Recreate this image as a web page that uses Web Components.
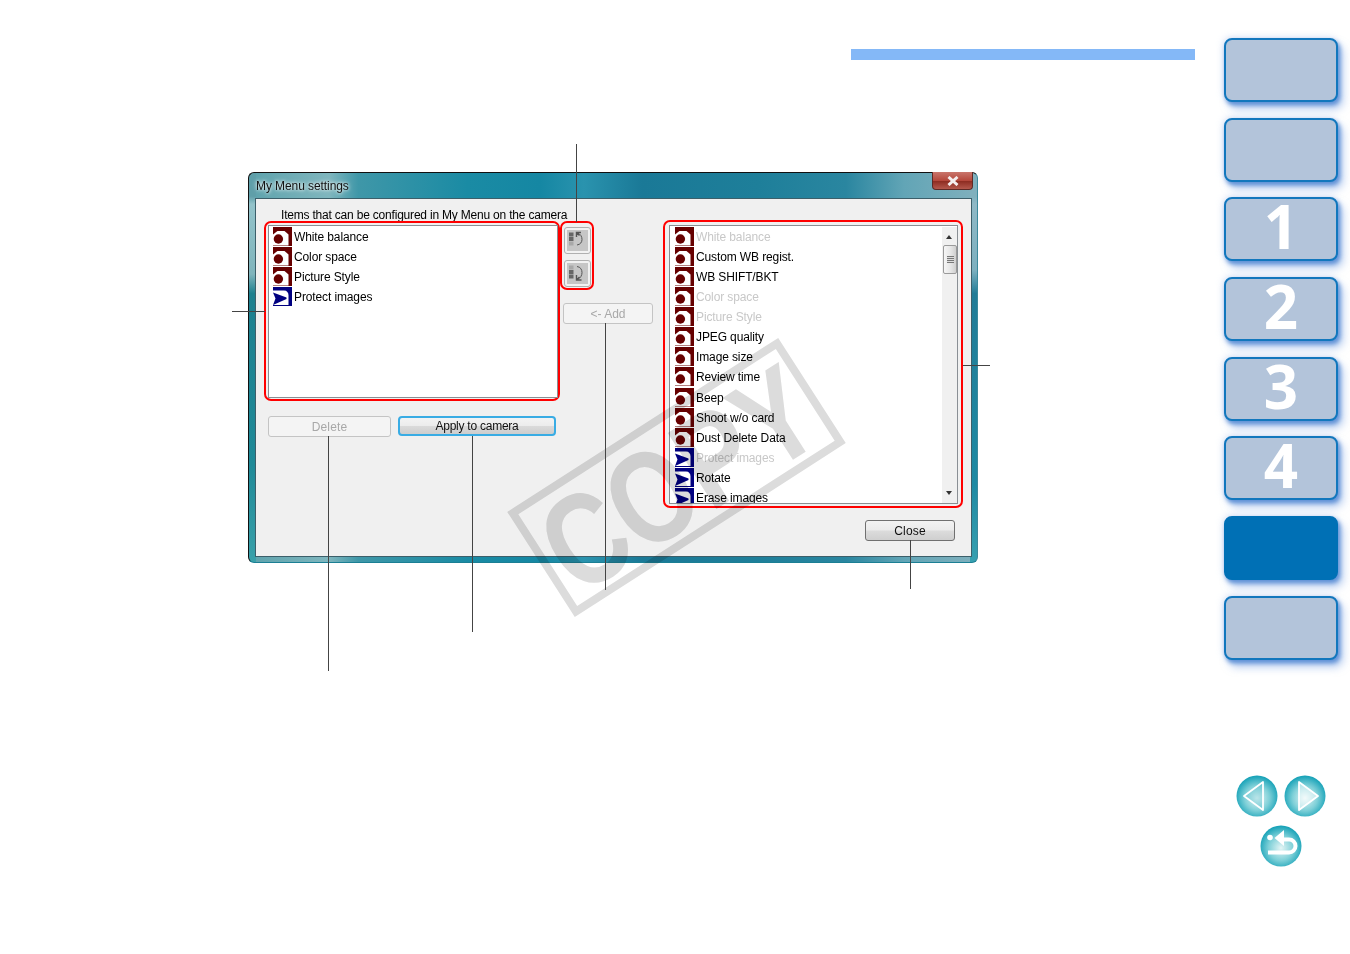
<!DOCTYPE html>
<html lang="en"><head><meta charset="utf-8"><title>My Menu settings</title>
<style>
html,body{margin:0;padding:0;background:#fff}
body{font-family:"Liberation Sans",Arial,sans-serif;font-size:12px;color:#000}
</style></head><body>

<x-page>
  <x-dialog slot="main" caption="My Menu settings">
    <span slot="label">Items that can be configured in My Menu on the camera</span>
    <x-list slot="left">
      <x-item>White balance</x-item><x-item>Color space</x-item><x-item>Picture Style</x-item><x-item icon="play">Protect images</x-item>
    </x-list>
    <x-btn slot="delete" kind="off" style="width:123px;height:21px">Delete</x-btn>
    <x-btn slot="apply" kind="focus" style="width:158px;height:20px;letter-spacing:-.25px">Apply to camera</x-btn>
    <x-order slot="up"></x-order>
    <x-order slot="down" dir="down"></x-order>
    <x-btn slot="add" kind="off" style="width:90px;height:21px;margin-left:3px;letter-spacing:0">&lt;- Add</x-btn>
    <x-list slot="right" scroll>
      <x-item off>White balance</x-item><x-item>Custom WB regist.</x-item><x-item>WB SHIFT/BKT</x-item><x-item off>Color space</x-item><x-item off>Picture Style</x-item><x-item>JPEG quality</x-item><x-item>Image size</x-item><x-item>Review time</x-item><x-item>Beep</x-item><x-item>Shoot w/o card</x-item><x-item>Dust Delete Data</x-item><x-item off icon="play">Protect images</x-item><x-item icon="play">Rotate</x-item><x-item icon="play">Erase images</x-item>
    </x-list>
    <x-btn slot="close" style="width:90px;height:21px">Close</x-btn>
  </x-dialog>

  <x-tab slot="rail"></x-tab><x-tab slot="rail"></x-tab>
  <x-tab slot="rail">1</x-tab><x-tab slot="rail">2</x-tab><x-tab slot="rail">3</x-tab><x-tab slot="rail">4</x-tab>
  <x-tab slot="rail" active></x-tab><x-tab slot="rail"></x-tab>
  <x-nav slot="rail"></x-nav>

  <x-watermark slot="over"></x-watermark>
  <x-callout slot="over" style="left:576px;top:144px;width:1px;height:78px"></x-callout>
  <x-callout slot="over" style="left:232px;top:311px;width:33px;height:1px"></x-callout>
  <x-callout slot="over" style="left:963px;top:365px;width:27px;height:1px"></x-callout>
  <x-callout slot="over" style="left:605px;top:323px;width:1px;height:267px"></x-callout>
  <x-callout slot="over" style="left:472px;top:436px;width:1px;height:196px"></x-callout>
  <x-callout slot="over" style="left:328px;top:436px;width:1px;height:235px"></x-callout>
  <x-callout slot="over" style="left:910px;top:540px;width:1px;height:49px"></x-callout>
</x-page>

<script>
function shadow(el, html){ const r = el.attachShadow({mode:'open'}); r.innerHTML = html; return r; }

customElements.define('x-page', class extends HTMLElement{
  constructor(){ super(); shadow(this, `<style>
    :host{display:grid;grid-template-columns:1224px 126px;width:1350px;height:954px;position:relative;overflow:hidden;background:#fff}
    .bar{height:11px;width:344px;margin:49px 0 112px 851px;background:#84b8f7}
    .main{margin-left:248px}
    .rail{display:flex;flex-direction:column;gap:15.67px;padding-top:38px}
  </style>
  <div class="left"><div class="bar"></div><div class="main"><slot name="main"></slot></div></div>
  <div class="rail"><slot name="rail"></slot></div>
  <slot name="over"></slot>`); }
});

customElements.define('x-tab', class extends HTMLElement{
  constructor(){ super(); shadow(this, `<style>
    :host{display:flex;align-items:center;justify-content:center;box-sizing:border-box;width:114px;height:64px;flex:none;padding-bottom:6px;background:#b3c4da;border:2px solid #1277bd;border-radius:8px;
      box-shadow:2px 3px 4px #5d90d6,5px 7px 9px rgba(120,160,225,.55),-1px -1px 7px rgba(170,190,235,.45);
      font:700 60px/1 "Open Sans","Liberation Sans",sans-serif;color:#fff}
    :host([active]){background:#0070b5;border-color:#0070b5}
  </style><slot></slot>`); }
});

customElements.define('x-nav', class extends HTMLElement{
  constructor(){ super(); const disc=(id)=>`<defs><radialGradient id="${id}" cx=".5" cy=".55" r=".55"><stop offset="0" stop-color="#e4f5f5"/><stop offset=".55" stop-color="#7fd0d8"/><stop offset="1" stop-color="#12a0b6"/></radialGradient></defs><circle cx="21" cy="21" r="20.5" fill="url(#${id})"/>`;
  shadow(this, `<style>
    :host{display:flex;flex-direction:column;align-items:center;gap:8px;width:114px;margin-top:99.300px}
    .row{display:flex;gap:6px}
    svg{display:block;width:42px;height:42px}
  </style>
  <div class="row">
    <svg viewBox="0 0 42 42">${disc('a')}<path d="M8 21 27 7V35Z" fill="#5cc0cc" fill-opacity=".3" stroke="#fff" stroke-width="1.800" stroke-linejoin="round"/></svg>
    <svg viewBox="0 0 42 42">${disc('b')}<path d="M34 21 15 7V35Z" fill="#fff" fill-opacity=".5" stroke="#fff" stroke-width="1.800" stroke-linejoin="round"/></svg>
  </div>
  <svg viewBox="0 0 42 42">${disc('c')}
    <circle cx="10" cy="12.500" r="2.800" fill="#fff"/>
    <path d="M20 14.500H29A6.500 6.500 0 0 1 29 27.500H8" fill="none" stroke="#fff" stroke-width="4"/>
    <path d="M14.500 13 24 5V21Z" fill="#fff"/>
  </svg>`); }
});

customElements.define('x-dialog', class extends HTMLElement{
  constructor(){ super(); shadow(this, `<style>
    :host{display:flex;flex-direction:column;box-sizing:border-box;width:730px;height:391px;position:relative;border:1px solid;border-color:#111 #3c8a9c #1b7f94 #111;border-radius:6px;padding:0 5px 5px 6px;
      background:
       linear-gradient(#5f9fa9 0,#5f9fa9 6%,#93c3ca 8%,#7fb4bc 26%,#1c7f8e 31%,#1f8a98 75%,#3aa1aa) left top/7px 100% no-repeat,
       linear-gradient(#80b0bd 0,#80b0bd 6%,#8fb9c6 8%,#7db0bf 25%,#227c97 31%,#1e8aa3 80%,#37a0b0) right top/7px 100% no-repeat,
       linear-gradient(90deg,#5da2ac 0,#7fb6be 11%,#3f97a8 15%,#1a8ba4 30%,#1587a3 40%,#2a93ae 46%,#1a7997 54%,#1e7f9a 70%,#2a86a0 82%,#62a5b6 90%,#80b0bd 100%)}
    .title{height:25px;flex:none;display:flex;align-items:center;font-size:12px;letter-spacing:-.08px;color:#111;text-shadow:0 0 5px #fff,0 0 3px rgba(255,255,255,.8);padding:1px 0 0 1px;box-sizing:border-box}
    .x{position:absolute;right:4px;top:-1px;width:41px;height:18px;box-sizing:border-box;border:1px solid #5d2a26;border-top:0;border-radius:0 0 4px 4px;background:linear-gradient(#c9756b,#b5483c 50%,#8e2d22 55%,#b4584c);display:flex;align-items:center;justify-content:center}
    .client{flex:1;box-sizing:border-box;background:#f0f0f0;border:1px solid #3c5f6a;display:grid;grid-template-columns:296px 103px 300px;padding-left:8px;position:relative}
    .c1{display:flex;flex-direction:column}
    .label{height:22px;box-sizing:border-box;padding:10px 0 0 17px;line-height:12px;font-size:12px;letter-spacing:-.2px;white-space:nowrap}
    .hl{box-sizing:border-box;border:2px solid #f00;border-radius:7px;padding:2px}
    .hl1{height:180px;padding:2px 0 1px 2px}
    .row{display:flex;gap:7px;margin:15px 0 0 4px}
    .c2{padding-top:22px}
    .hl2{width:34px;height:69px;padding:4px 2px;display:flex;flex-direction:column;gap:6px}
    .add{margin-top:13px}
    .c3{padding-top:21px;display:flex;flex-direction:column;align-items:flex-end}
    .hl3{width:300px;height:288px;padding:3px 3px 2px 4px}
    .close{margin:12px 8px 0 0}
  </style>
  <div class="title"></div>
  <div class="x"><svg width="14" height="10" viewBox="0 0 14 10"><path d="M2.500 1 11.500 9M11.500 1 2.500 9" stroke="#f4eeee" stroke-width="3" fill="none"/></svg></div>
  <div class="client">
    <div class="c1">
      <div class="label"><slot name="label"></slot></div>
      <div class="hl hl1"><slot name="left"></slot></div>
      <div class="row"><slot name="delete"></slot><slot name="apply"></slot></div>
    </div>
    <div class="c2">
      <div class="hl hl2"><slot name="up"></slot><slot name="down"></slot></div>
      <div class="add"><slot name="add"></slot></div>
    </div>
    <div class="c3">
      <div class="hl hl3"><slot name="right"></slot></div>
      <div class="close"><slot name="close"></slot></div>
    </div>
  </div>`);
  this.shadowRoot.querySelector('.title').textContent=this.getAttribute('caption'); }
});

customElements.define('x-list', class extends HTMLElement{
  constructor(){ super(); shadow(this, `<style>
    :host{display:flex;height:100%;box-sizing:border-box;background:#fff;border:1px solid #8a8f94;overflow:hidden}
    .rows{flex:1;display:flex;flex-direction:column;padding:1px 0 0 4px;min-width:0}
    .sb{display:none;width:15px;flex:none;background:#f0f0f0;flex-direction:column;align-items:center;position:relative;margin-top:1px}
    :host([scroll]) .sb{display:flex}
    :host([scroll]) .rows{padding-left:5px}
    .thumb{position:absolute;left:1px;top:18px;width:14px;height:29px;box-sizing:border-box;border:1px solid #9a9a9a;border-radius:2px;background:linear-gradient(90deg,#f6f6f6,#e6e6e6 55%,#cfcfcf);display:flex;align-items:center;justify-content:center}
    .up{position:absolute;left:4px;top:8px;border:3.500px solid transparent;border-top:0;border-bottom:4px solid #333}
    .down{position:absolute;left:4px;bottom:8px;border:3.500px solid transparent;border-bottom:0;border-top:4px solid #333}
    .grip{width:7px;height:7px;background:repeating-linear-gradient(#777 0 1px,#ddd 1px 2px)}
  </style><div class="rows"><slot></slot></div>
  <div class="sb"><span class="up"></span><span class="thumb"><span class="grip"></span></span><span class="down"></span></div>`); }
});

customElements.define('x-item', class extends HTMLElement{
  constructor(){ super();
  const cam=`<svg viewBox="0 0 19 19" width="19" height="19"><rect width="19" height="19" fill="#660000"/><path d="M0 7.500 4.500 4H11.500L15.500 7.500V18.500H0Z" fill="#fff"/><circle cx="5.400" cy="12" r="4.700" fill="#660000"/></svg>`;
  const play=`<svg viewBox="0 0 19 19" width="19" height="19"><rect width="19" height="19" fill="#000080"/><path d="M0 3.500H11C14 3.500 15.500 5.500 15.500 8.500V18H0Z" fill="#fff"/><path d="M0 5.500 13.500 10.500V12L0 18 2.500 11.500Z" fill="#000080"/></svg>`;
  shadow(this, `<style>
    :host{display:flex;align-items:center;gap:2px;height:20.070px;flex:none;font-size:12px;letter-spacing:-.12px;white-space:nowrap;color:#000}
    :host([off]){color:#c8c8c8}
    svg{display:block;flex:none;align-self:flex-start}
  </style>${this.getAttribute('icon')==='play'?play:cam}<slot></slot>`); }
});

customElements.define('x-btn', class extends HTMLElement{
  constructor(){ super(); shadow(this, `<style>
    :host{display:flex;align-items:center;justify-content:center;box-sizing:border-box;font-size:12px;letter-spacing:.15px;border:1px solid #707070;border-radius:3px;background:linear-gradient(#f3f3f3 0,#ebebeb 48%,#dcdcdc 52%,#cfcfcf);color:#111;white-space:nowrap}
    :host([kind=off]){border-color:#c4c4c4;background:#f4f4f4;color:#a8a8a8}
    :host([kind=focus]){border:2px solid #39ace4;border-radius:4px;background:linear-gradient(#f3f3f3 0,#ececec 48%,#dadada 52%,#cdcdcd)}
  </style><slot></slot>`); }
});

customElements.define('x-order', class extends HTMLElement{
  constructor(){ super(); const d=this.getAttribute('dir')==='down';
  const c=d?['#a8a8a8','#666','#666']:['#666','#666','#a8a8a8'];
  const arrow=d
    ?`<path d="M10 3.500C13.500 4 15 6.500 15 9.500 15 12.500 13.500 15 10.500 16.500" fill="none" stroke="#555"/><path d="M9.500 12V17H14.500M9.500 17 12.500 14" fill="none" stroke="#555" stroke-width="1.400"/>`
    :`<path d="M10 15C13.500 14.500 15 12 15 9.500 15 6.500 13.500 4 10.500 3" fill="none" stroke="#555"/><path d="M9.500 7V2.500H14M9.500 2.500 12.500 5.500" fill="none" stroke="#555" stroke-width="1.400"/>`;
  shadow(this, `<style>
    :host{display:block;box-sizing:border-box;width:27px;height:27px;border:1px solid #b0b0b0;border-radius:3px;background:#f2f2f2;padding:2px}
    svg{display:block;background:#c6c6c6;width:21px;height:21px}
  </style><svg viewBox="0 0 21 21">
    <rect x="2" y="2.500" width="4.500" height="4" fill="${c[0]}"/><rect x="2" y="7" width="4.500" height="4" fill="${c[1]}"/><rect x="2" y="11.500" width="4.500" height="4" fill="${c[2]}"/>${arrow}</svg>`); }
});

customElements.define('x-callout', class extends HTMLElement{
  constructor(){ super(); shadow(this, `<style>:host{display:block;position:absolute;background:#444}</style>`); }
});

customElements.define('x-watermark', class extends HTMLElement{
  constructor(){ super(); shadow(this, `<style>
    :host{display:block;position:absolute;left:0;top:0;width:1350px;height:954px;pointer-events:none;mix-blend-mode:multiply}
    svg{display:block}
    text{font:700 131px "Liberation Sans",sans-serif;fill:#dcdcdc}
  </style><svg width="1350" height="954" viewBox="0 0 1350 954"><g transform="translate(676.5 477.5) rotate(-32.700)">
    <rect x="-157" y="-58.500" width="314" height="117" fill="none" stroke="#dcdcdc" stroke-width="8"/>
    <text x="-148" y="48" textLength="298" lengthAdjust="spacingAndGlyphs">COPY</text></g></svg>`); }
});
</script>
</body></html>
